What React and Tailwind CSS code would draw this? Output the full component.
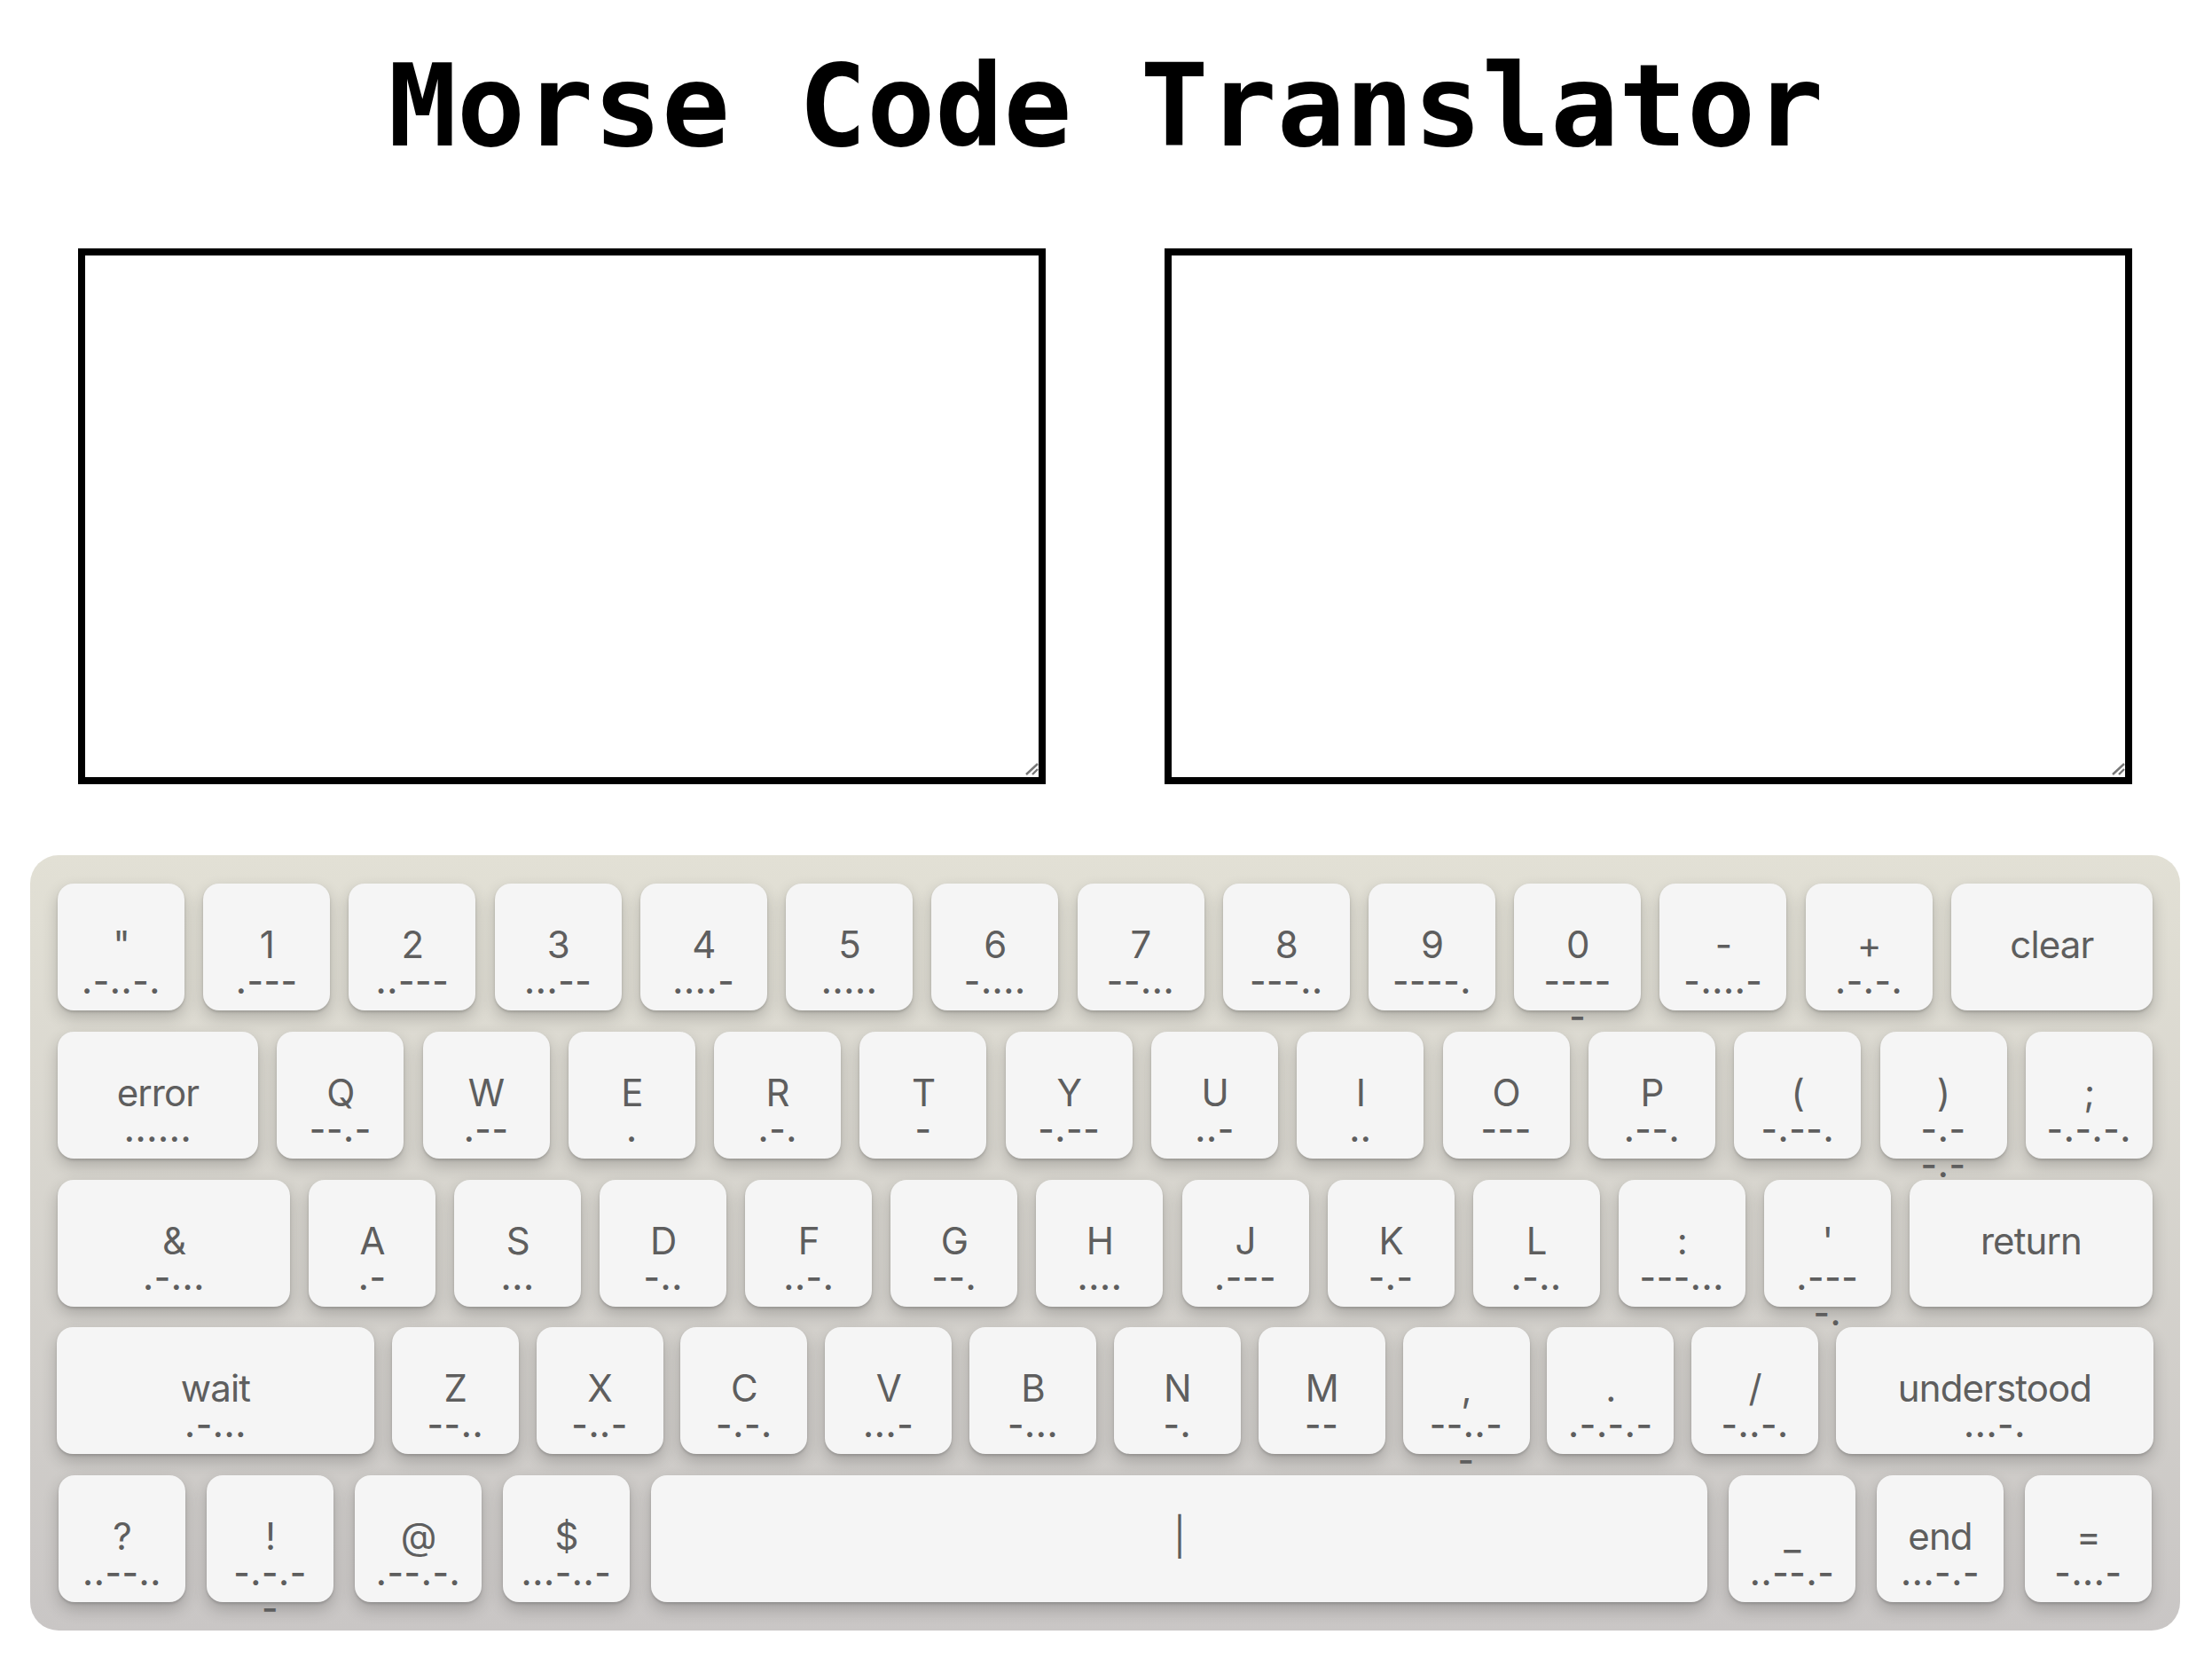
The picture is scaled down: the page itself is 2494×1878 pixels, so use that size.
import React from 'react';

const rows = [
  {
    layout: 'justify-between',
    keys: [
      ['"', '.-..-.'], ['1', '.---'], ['2', '..---'], ['3', '...--'], ['4', '....-'], ['5', '.....'],
      ['6', '-....'], ['7', '--...'], ['8', '---..'], ['9', '----.'], ['0', '----\n-'], ['-', '-....-'],
      ['+', '.-.-.'], ['clear', '', 'w-[227px]'],
    ],
  },
  {
    layout: 'justify-between',
    keys: [
      ['error', '......', 'w-[226px]'], ['Q', '--.-'], ['W', '.--'], ['E', '.'], ['R', '.-.'], ['T', '-'],
      ['Y', '-.--'], ['U', '..-'], ['I', '..'], ['O', '---'], ['P', '.--.'], ['(', '-.--.'],
      [')', '-.-\n-.-'], [';', '-.-.-.'],
    ],
  },
  {
    layout: 'justify-between',
    keys: [
      ['&', '.-...', 'w-[262px]'], ['A', '.-'], ['S', '...'], ['D', '-..'], ['F', '..-.'], ['G', '--.'],
      ['H', '....'], ['J', '.---'], ['K', '-.-'], ['L', '.-..'], [':', '---...'], ["'", '.---\n-.'],
      ['return', '', 'w-[274px]'],
    ],
  },
  {
    layout: 'justify-between -mx-px',
    keys: [
      ['wait', '.-...', 'w-[358px]'], ['Z', '--..'], ['X', '-..-'], ['C', '-.-.'], ['V', '...-'], ['B', '-...'],
      ['N', '-.'], ['M', '--'], [',', '--..-\n-'], ['.', '.-.-.-'], ['/', '-..-.'],
      ['understood', '...-.', 'w-[358px]'],
    ],
  },
  {
    layout: 'gap-6 px-px',
    keys: [
      ['?', '..--..'], ['!', '-.-.-\n-'], ['@', '.--.-.'], ['$', '...-..-'], ['|', '', 'flex-1'],
      ['_', '..--.-'], ['end', '...-.-'], ['=', '-...-'],
    ],
  },
];

const Key = ({ label, morse, width }) => (
  <div
    className={`${width || 'w-[143px]'} flex h-[143px] shrink-0 flex-col items-center rounded-[18px] bg-[#f5f5f5] pt-[48px] text-center text-[#5e5e5e] shadow-[0_2px_3px_rgba(0,0,0,0.15),0_8px_18px_rgba(0,0,0,0.2)]`}
  >
    <div className="text-[42px] leading-[42px] tracking-[-0.9px]">{label}</div>
    {morse && <div className="whitespace-pre text-[40px] font-medium leading-[40px] tracking-[0.6px]">{morse}</div>}
  </div>
);

const Output = () => (
  <div className="relative h-[604px] w-[1091px]">
    <textarea className="block h-full w-full resize-none border-[8px] border-black bg-white" />
    <svg className="absolute bottom-2 right-2" width="16" height="16" viewBox="0 0 16 16">
      <path d="M2 13 L15 1 M9 13 L15 7" stroke="#777" strokeWidth="2.4" fill="none" />
    </svg>
  </div>
);

const App = () => {
  return (
    <div className="min-h-[1878px] bg-white font-['Inter',sans-serif]">
      <h1 className="pt-[40px] text-center font-['DejaVu_Sans_Mono',monospace] text-[128px] font-bold leading-[160px] text-black">
        Morse Code Translator
      </h1>

      <div className="mt-[80px] flex gap-[134px] pl-[88px]">
        <Output />
        <Output />
      </div>

      <div className="ml-[34px] mt-[80px] flex h-[874px] w-[2424px] flex-col gap-[23.75px] rounded-[32px] bg-gradient-to-b from-[#e2e0d5] to-[#c9c6c5] px-[31px] py-[32px]">
        {rows.map((row, i) => (
          <div key={i} className={`flex ${row.layout}`}>
            {row.keys.map(([label, morse, width]) => (
              <Key key={label} label={label} morse={morse} width={width} />
            ))}
          </div>
        ))}
      </div>
    </div>
  );
};

export default App;
